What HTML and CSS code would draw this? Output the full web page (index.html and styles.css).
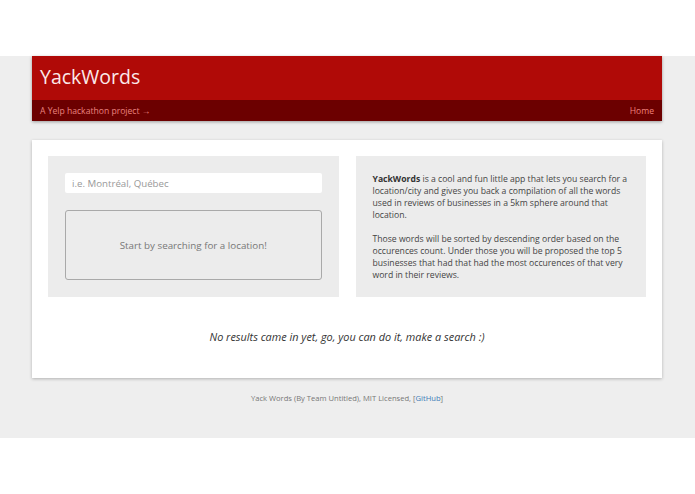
FILE: index.html
```html
<!DOCTYPE html>
<html lang="en">
<head>
    <meta charset="UTF-8">
    <meta name="viewport" content="width=device-width, initial-scale=1.0">
    <title>YackWords</title>
    <link rel="stylesheet" href="styles.css">
</head>
<body>
    <div class="page">
        <div class="wrap">
            <header class="header">
                <div class="brand">YackWords</div>
                <div class="subbar">
                    <span>A Yelp hackathon project &rarr;</span>
                    <a href="#" class="nav-link">Home</a>
                </div>
            </header>

            <div class="card">
                <div class="panels">
                    <div class="panel">
                        <input type="text" class="search" placeholder="i.e. Montréal, Québec">
                        <div class="results-box">Start by searching for a location!</div>
                    </div>
                    <div class="panel about">
                        <p><strong>YackWords</strong> is a cool and fun little app that lets you search for a location/city and gives you back a compilation of all the words used in reviews of businesses in a 5km sphere around that location.</p>
                        <p>Those words will be sorted by descending order based on the occurences count. Under those you will be proposed the top 5 businesses that had that had the most occurences of that very word in their reviews.</p>
                    </div>
                </div>
                <p class="no-results">No results came in yet, go, you can do it, make a search :)</p>
            </div>

            <footer class="footer">
                Yack Words (By Team Untitled), MIT Licensed, [<a href="#">GitHub</a>]
            </footer>
        </div>
    </div>
</body>
</html>
```

FILE: styles.css
```css
/* Global */
* {
    box-sizing: border-box;
}

body {
    margin: 0;
    padding-top: 56px;
    background: #fff;
    font-family: 'Open Sans', 'Noto Sans', sans-serif;
    color: #333;
}

.page {
    background: #eeeeee;
    height: 382px;
}

.wrap {
    width: 630px;
    margin-left: 32px;
}

/* Header */
.header {
    box-shadow: 0 1px 3px rgba(0, 0, 0, 0.35);
}

.brand {
    background: #b00a07;
    color: #fbe9e9;
    height: 44px;
    padding: 8px 8px 0;
    font-size: 19.5px;
    line-height: 26px;
}

.subbar {
    background: #6c0000;
    height: 21px;
    padding: 0 8px;
    display: flex;
    justify-content: space-between;
    align-items: center;
    font-size: 8.6px;
    color: #e9827f;
}

.nav-link {
    color: #f0807c;
    text-decoration: none;
}

/* Main card */
.card {
    margin-top: 19px;
    background: #fff;
    padding: 16px 16px 1px;
    box-shadow: 0 1px 3px rgba(0, 0, 0, 0.25);
    height: 238px;
}

.panels {
    display: grid;
    grid-template-columns: 1fr 1fr;
    gap: 17px;
}

.panel {
    background: #ececec;
    height: 141px;
    padding: 17px;
}

.search {
    display: block;
    width: 100%;
    height: 20px;
    border: none;
    border-radius: 2px;
    padding: 0 7px;
    font-family: inherit;
    font-size: 9.7px;
    color: #555;
    background: #fff;
    outline: none;
}

.search::placeholder {
    color: #999;
}

.results-box {
    margin-top: 17px;
    height: 70px;
    border: 1px solid #a9a9a9;
    border-radius: 3px;
    display: flex;
    align-items: center;
    justify-content: center;
    font-size: 9.8px;
    color: #777;
}

.about {
    font-size: 8.65px;
    line-height: 12px;
    color: #444;
}

.about p {
    margin: 0 0 12px;
}

.about strong {
    color: #333;
}

.no-results {
    margin: 32px 0 0;
    text-align: center;
    font-style: italic;
    font-size: 10.9px;
    color: #333;
}

/* Footer */
.footer {
    margin-top: 15px;
    text-align: center;
    font-size: 7.6px;
    color: #777;
}

.footer a {
    color: #3b7bb8;
    text-decoration: none;
}
```
